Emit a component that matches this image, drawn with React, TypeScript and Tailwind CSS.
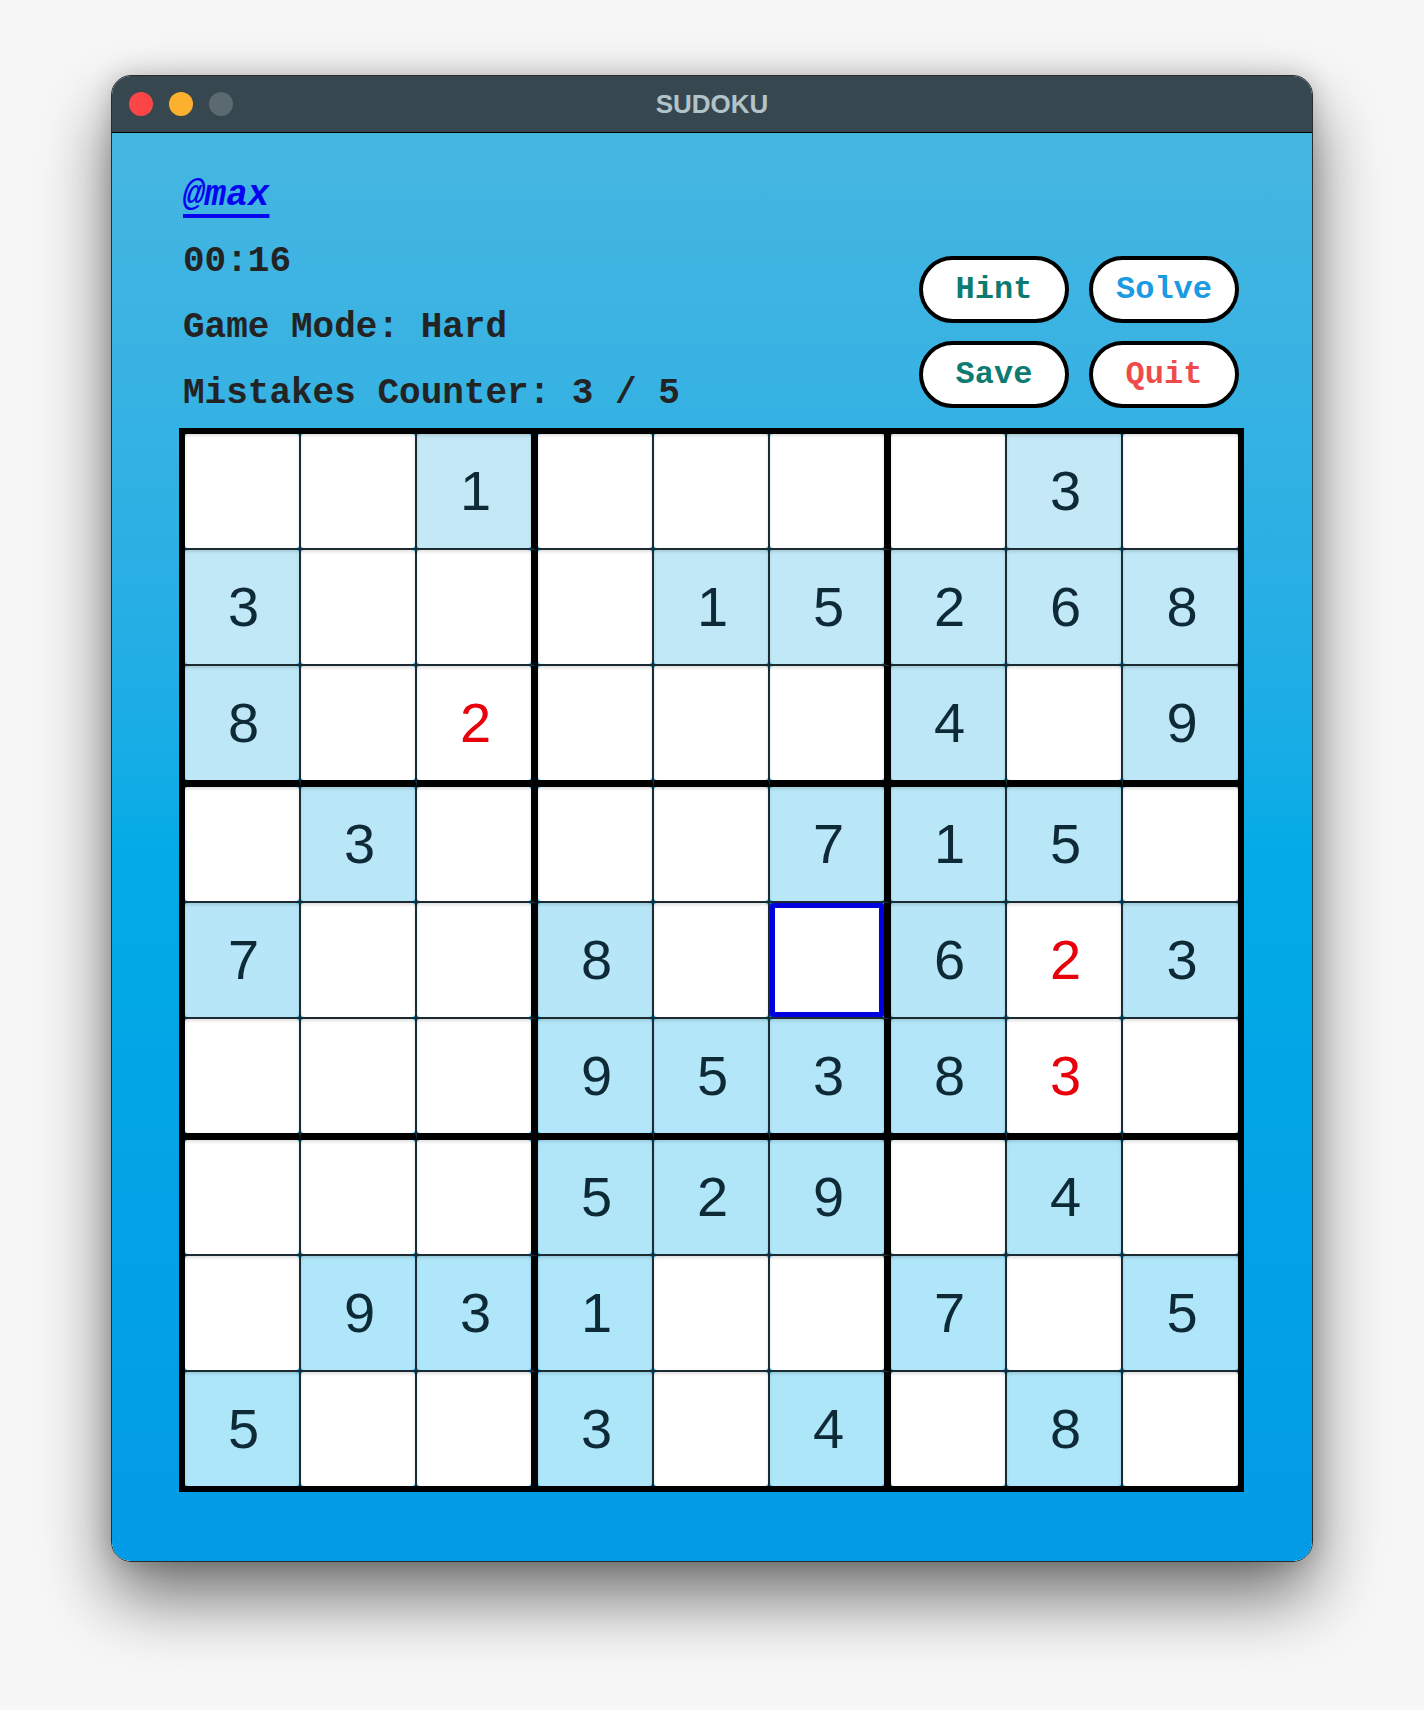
import React from 'react';

type Cell = { v: number | null; given: boolean; wrong?: boolean };

// 0 = empty, positive = given clue, negative = wrong entry (shown red)
const board: number[][] = [
  [0, 0, 1, 0, 0, 0, 0, 3, 0],
  [3, 0, 0, 0, 1, 5, 2, 6, 8],
  [8, 0, -2, 0, 0, 0, 4, 0, 9],
  [0, 3, 0, 0, 0, 7, 1, 5, 0],
  [7, 0, 0, 8, 0, 0, 6, -2, 3],
  [0, 0, 0, 9, 5, 3, 8, -3, 0],
  [0, 0, 0, 5, 2, 9, 0, 4, 0],
  [0, 9, 3, 1, 0, 0, 7, 0, 5],
  [5, 0, 0, 3, 0, 4, 0, 8, 0],
];

const selected = { r: 4, c: 5 };

// given-cell tint drifts with the background gradient
const rowTint = [
  'bg-[#c5e8f6]',
  'bg-[#c1e8f6]',
  'bg-[#bde7f7]',
  'bg-[#b9e7f7]',
  'bg-[#b6e6f8]',
  'bg-[#b3e6f8]',
  'bg-[#b1e6f9]',
  'bg-[#afe6f9]',
  'bg-[#ade6f9]',
];

const rightBorder = (c: number) =>
  c === 8 ? '' : c % 3 === 2 ? 'border-r-[7px] border-r-black' : 'border-r-2 border-r-[#1c2a31]';

const bottomBorder = (r: number) =>
  r === 8 ? '' : r % 3 === 2 ? 'border-b-[7px] border-b-black' : 'border-b-2 border-b-[#1c2a31]';

const toCell = (n: number): Cell =>
  n === 0 ? { v: null, given: false } : n < 0 ? { v: -n, given: false, wrong: true } : { v: n, given: true };

const SudokuCell: React.FC<{ r: number; c: number; cell: Cell }> = ({ r, c, cell }) => {
  const isSelected = selected.r === r && selected.c === c;
  return (
    <div className={`${rightBorder(c)} ${bottomBorder(r)}`}>
      <div
        className={`w-full h-[114px] rounded-[3px] flex items-center justify-center shadow-[inset_0_2px_3px_rgba(0,0,0,0.12)] ${
          cell.given ? rowTint[r] : 'bg-white'
        } ${isSelected ? 'border-[5px] border-[#0000e0] shadow-none' : ''}`}
      >
        {cell.v !== null && (
          <span
            className={`pl-[3px] font-['Liberation_Sans',Arial,sans-serif] text-[56px] leading-none ${
              cell.wrong ? 'text-[#e8000a]' : 'text-[#0e2a37]'
            }`}
          >
            {cell.v}
          </span>
        )}
      </div>
    </div>
  );
};

const PillButton: React.FC<{ label: string; color: string }> = ({ label, color }) => (
  <button
    className={`w-[150px] h-[67px] rounded-full bg-white border-4 border-black font-['Liberation_Mono','Courier_New',monospace] font-bold text-[32px] leading-none ${color}`}
  >
    {label}
  </button>
);

export default function App() {
  return (
    <div className="w-[1424px] h-[1710px] bg-[#f7f7f7] pt-[75px] pl-[111px]">
      <div className="w-[1202px] h-[1487px] rounded-[20px] overflow-hidden border border-[#2b2b2b] flex flex-col shadow-[0_35px_70px_rgba(0,0,0,0.55),0_0_25px_rgba(0,0,0,0.18)]">
        {/* Title bar */}
        <div className="h-[57px] shrink-0 bg-[#37474f] border-b border-black grid grid-cols-3 items-center">
          <div className="flex items-center gap-[16px] pl-[17px]">
            <span className="w-[24px] h-[24px] rounded-full bg-[#fa4646]" />
            <span className="w-[24px] h-[24px] rounded-full bg-[#fbb12d]" />
            <span className="w-[24px] h-[24px] rounded-full bg-[#5b6a71]" />
          </div>
          <div className="text-center font-['Liberation_Sans',Arial,sans-serif] font-bold text-[26px] text-[#b3c3ca]">
            SUDOKU
          </div>
          <div />
        </div>

        {/* Content */}
        <div className="flex-1 bg-linear-to-b from-[#46b6e1] via-[#03abe6] to-[#039be6] px-[67px] pt-[30px]">
          <div className="flex justify-between">
            <div className="flex flex-col pl-[4px] font-['Liberation_Mono','Courier_New',monospace] font-bold text-[36px] text-[#232323]">
              <a className="h-[66px] leading-[66px] italic text-[#0505f0] underline decoration-[4px] underline-offset-[9px]">
                @max
              </a>
              <div className="h-[66px] leading-[66px]">00:16</div>
              <div className="h-[66px] leading-[66px]">Game Mode: Hard</div>
              <div className="h-[66px] leading-[66px]">Mistakes Counter: 3 / 5</div>
            </div>
            <div className="self-end mb-[19px] mr-[6px] grid grid-cols-2 gap-x-[20px] gap-y-[18px]">
              <PillButton label="Hint" color="text-[#0e7b73]" />
              <PillButton label="Solve" color="text-[#1a9be2]" />
              <PillButton label="Save" color="text-[#0e7b73]" />
              <PillButton label="Quit" color="text-[#ef4b4b]" />
            </div>
          </div>

          {/* Board */}
          <div className="mt-[1px] w-fit border-[6px] border-black grid grid-cols-[116px_116px_121px_116px_116px_121px_116px_116px_115px]">
            {board.map((row, r) =>
              row.map((n, c) => <SudokuCell key={`${r}-${c}`} r={r} c={c} cell={toCell(n)} />)
            )}
          </div>
        </div>
      </div>
    </div>
  );
}
